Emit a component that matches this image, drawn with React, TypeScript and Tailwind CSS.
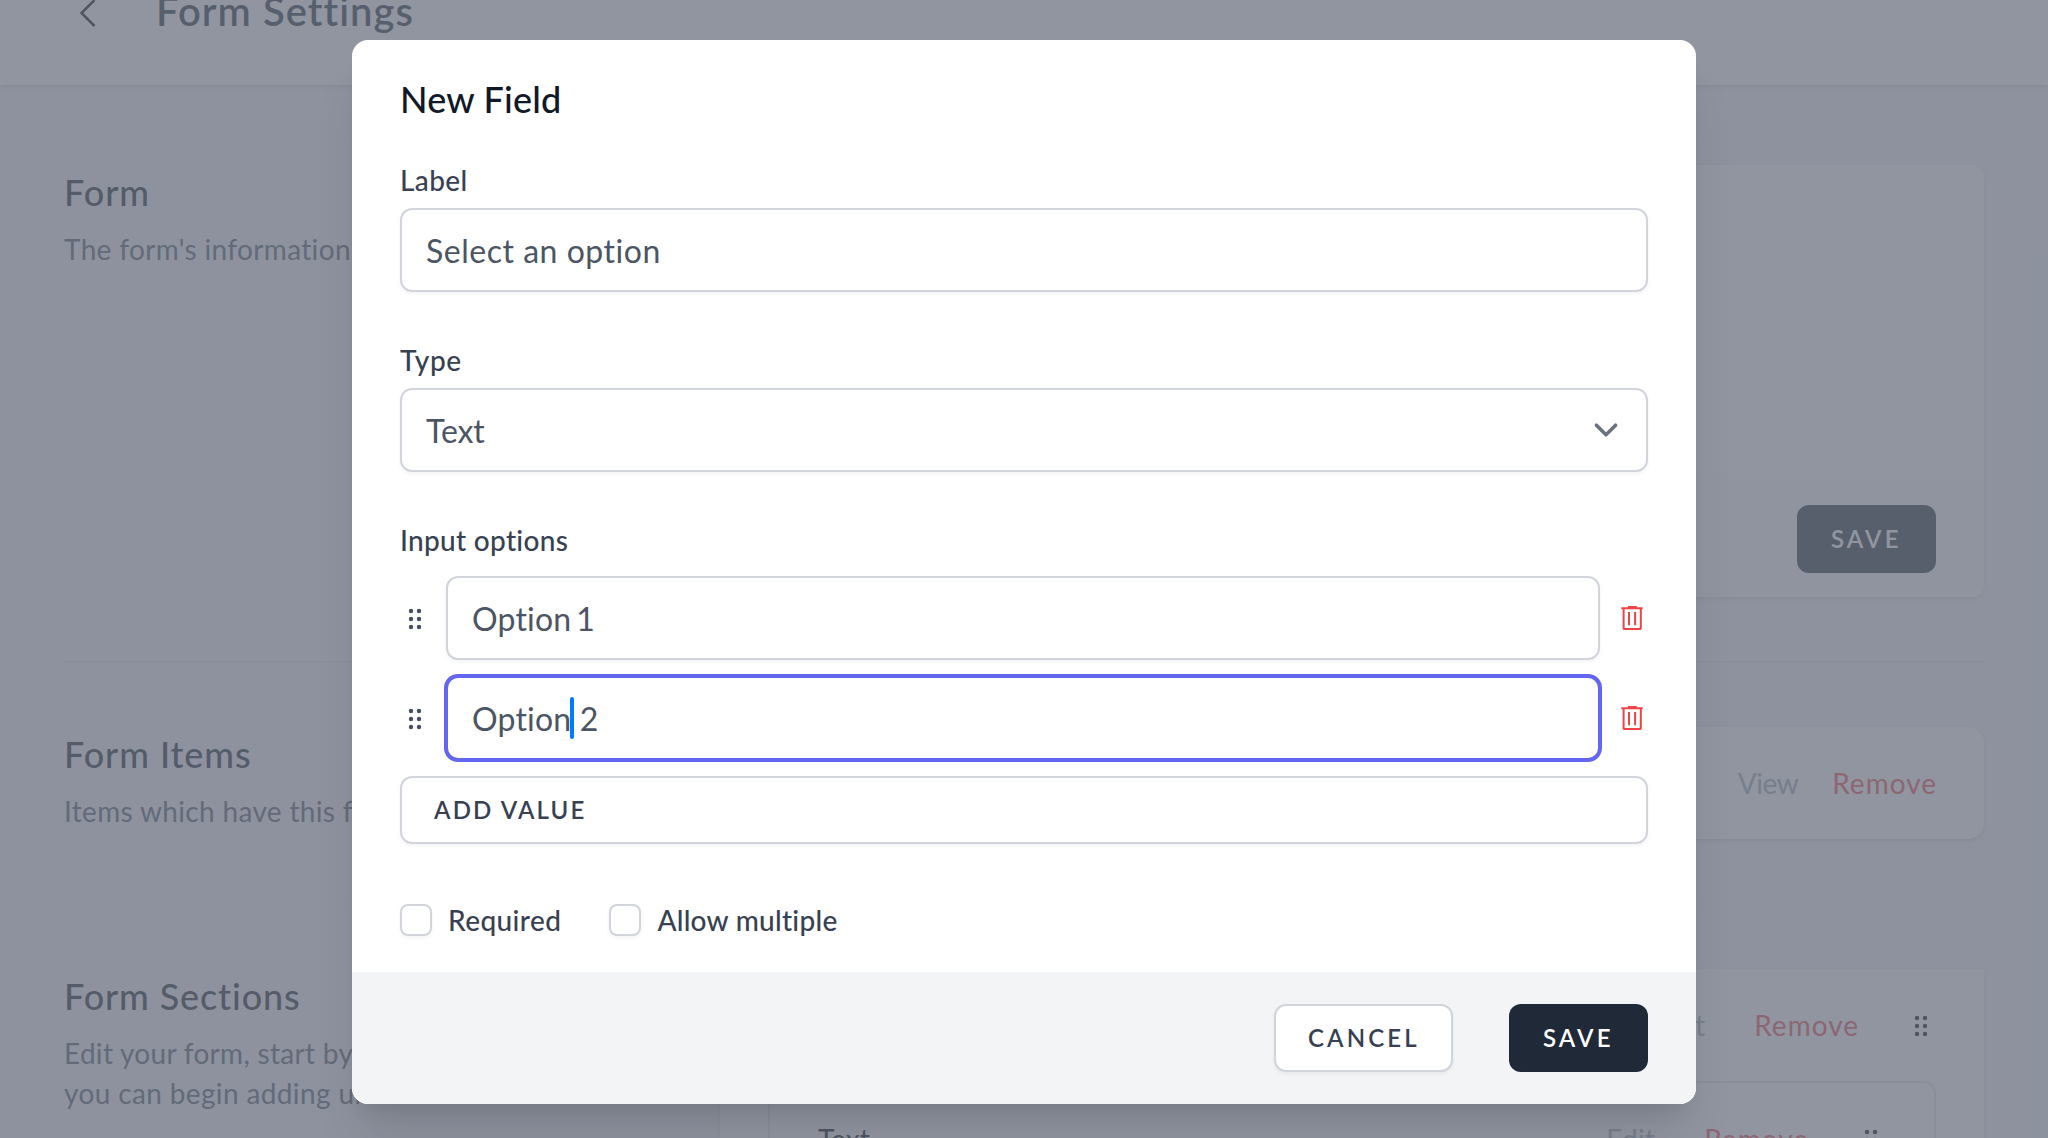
import type { ReactNode } from "react";

const field =
  "flex h-[84px] items-center rounded-xl border-2 border-[#d1d5db] bg-white px-6 pt-[2px] text-[32px] text-[#4b5563] shadow-[0_2px_4px_rgba(0,0,0,0.05)]";

function DragDots({ className }: { className: string }) {
  return (
    <svg viewBox="0 0 30 32" className={`h-8 w-[30px] shrink-0 ${className}`} fill="currentColor">
      {[9, 17, 25].map((y) => (
        <g key={y}>
          <circle cx="11" cy={y} r="2.2" />
          <circle cx="19" cy={y} r="2.2" />
        </g>
      ))}
    </svg>
  );
}

function TrashIcon() {
  return (
    <svg viewBox="0 0 32 32" className="h-8 w-8 shrink-0 text-[#ef4444]" fill="none" stroke="currentColor" strokeWidth="2">
      <path d="M5.3 6.3H26.7M12 5H20.8M13 10V23.3M19.1 10V23.3" />
      <path d="M7.6 6.3V26.2a.9.9 0 0 0 .9.9H23.9a.9.9 0 0 0 .9-.9V6.3" />
    </svg>
  );
}

function OptionRow({ focused, children }: { focused?: boolean; children: ReactNode }) {
  return (
    <div className="flex items-center gap-4">
      <DragDots className="text-[#434d5c]" />
      <div
        className={
          focused
            ? "flex h-[84px] flex-1 items-center rounded-xl border-2 border-[#6366f1] bg-white px-6 pt-[2px] text-[32px] text-[#4b5563] shadow-[0_0_0_2px_#6366f1]"
            : `${field} flex-1`
        }
      >
        {children}
      </div>
      <TrashIcon />
    </div>
  );
}

function Section({ title, titleClass, text, children }: { title: string; titleClass: string; text: ReactNode; children: ReactNode }) {
  return (
    <section className="mx-16 flex">
      <div className="w-[656px] shrink-0">
        <h2 className={`h-[52px] text-[36px] leading-[54px] font-medium text-[#111827] ${titleClass}`}>{title}</h2>
        <div className="mt-3 text-[28px] leading-10 whitespace-nowrap text-[#4b5563]">{text}</div>
      </div>
      <div className="flex-1">{children}</div>
    </section>
  );
}

function Divider() {
  return <div className="mx-16 my-16 h-0.5 shrink-0 bg-[#ebedf0]" />;
}

function Page() {
  return (
    <div className="flex h-full flex-col overflow-hidden bg-[#f3f4f6]">
      <header className="-mt-[61px] flex h-[146px] shrink-0 items-center bg-white pl-[79px] shadow-[0_2px_6px_rgba(0,0,0,0.1),0_2px_4px_-2px_rgba(0,0,0,0.1)]">
        <svg viewBox="0 0 18 30" className="mt-[2px] h-[30px] w-[18px]" fill="none" stroke="#000" strokeWidth="2.5">
          <path d="M15.5 2L2.5 15L15.5 28" />
        </svg>
        <h1 className="mb-[2px] ml-[59px] text-[40px] font-semibold tracking-[1.05px] text-[#1f2937]">Form Settings</h1>
      </header>
      <div className="h-20 shrink-0" />
      <Section title="Form" titleClass="tracking-[0.95px]" text={<p className="tracking-[0.34px]">The form's information.</p>}>
        <div className="overflow-hidden rounded-xl shadow-[0_2px_6px_rgba(0,0,0,0.1)]">
          <div className="h-[313px] bg-white" />
          <div className="flex h-[119px] items-center justify-end bg-[#f9fafb] px-12">
            <button className="mt-[3px] h-[68px] w-[139px] rounded-xl bg-[#1f2937] pb-px pl-[34px] text-left text-[24px] font-semibold tracking-[3.1px] text-white">
              SAVE
            </button>
          </div>
        </div>
      </Section>
      <Divider />
      <Section title="Form Items" titleClass="tracking-[0.92px]" text={<p className="tracking-[0.34px]">Items which have this form.</p>}>
        <div className="flex h-28 items-center justify-end gap-8 rounded-2xl bg-white px-12 text-[28px] shadow-[0_2px_6px_rgba(0,0,0,0.1),0_2px_4px_-2px_rgba(0,0,0,0.1)]">
          <span className="mr-[2px] tracking-[-0.44px] text-[#9ca3af]">View</span>
          <span className="-mr-px tracking-[1px] text-[#ef4444]">Remove</span>
        </div>
      </Section>
      <Divider />
      <Section
        title="Form Sections"
        titleClass="tracking-[0.88px]"
        text={
          <>
            <p className="tracking-[0.3px]">Edit your form, start by</p>
            <p className="tracking-[0.37px]">you can begin adding until</p>
          </>
        }
      >
        <div className="bg-white px-12 text-[28px] shadow-[0_2px_6px_rgba(0,0,0,0.1)]">
          <div className="flex h-28 items-center justify-end gap-12">
            <span className="mr-px tracking-[0.24px] text-[#9ca3af]">Edit</span>
            <span className="-mr-px tracking-[1px] text-[#ef4444]">Remove</span>
            <DragDots className="text-black" />
          </div>
          <div className="h-[300px] rounded-xl border-2 border-[#e5e7eb] px-12">
            <div className="flex h-28 items-center gap-12">
              <span className="flex-1 text-black">Text</span>
              <span className="mr-px tracking-[0.24px] text-[#9ca3af]">Edit</span>
              <span className="-mr-px tracking-[1px] text-[#ef4444]">Remove</span>
              <DragDots className="text-black" />
            </div>
          </div>
        </div>
      </Section>
    </div>
  );
}

function Checkbox({ label, className }: { label: string; className: string }) {
  return (
    <label className="flex items-center gap-4">
      <span className="h-8 w-8 rounded-lg border-2 border-[#d1d5db] bg-white shadow-[0_2px_4px_rgba(0,0,0,0.05)]" />
      <span className={`text-[28px] leading-8 font-medium text-[#374151] ${className}`}>{label}</span>
    </label>
  );
}

function NewFieldModal() {
  return (
    <div className="flex h-[1064px] w-[1344px] flex-col overflow-hidden rounded-2xl bg-white shadow-[0_40px_50px_-10px_rgba(0,0,0,0.1),0_16px_20px_-12px_rgba(0,0,0,0.1)]">
      <div className="flex-1 px-12 pt-[31px]">
        <h3 className="text-[36px] leading-[56px] font-medium tracking-[0.2px] text-[#111827]">New Field</h3>

        <div className="mt-[33px] text-[28px] leading-10 font-medium tracking-[0.4px] text-[#374151]">Label</div>
        <div className={`${field} mt-2`}>
          <span className="tracking-[0.52px]">Select an option</span>
        </div>

        <div className="mt-[48px] text-[28px] leading-10 font-medium tracking-[0.61px] text-[#374151]">Type</div>
        <div className={`${field} mt-2 justify-between pr-4`}>
          <span className="tracking-[-0.1px]">Text</span>
          <svg viewBox="0 0 20 20" className="-mt-[2px] h-12 w-12" fill="none" stroke="#6b7280" strokeWidth="1.5" strokeLinecap="round" strokeLinejoin="round">
            <path d="M6 8l4 4 4-4" />
          </svg>
        </div>

        <div className="mt-[48px] text-[28px] leading-10 font-medium tracking-[0.3px] text-[#374151]">Input options</div>
        <div className="mt-4 flex flex-col gap-4">
          <OptionRow>
            <span className="tracking-[0.2px] [word-spacing:-3.5px]">Option 1</span>
          </OptionRow>
          <OptionRow focused>
            <span className="relative tracking-[0.2px]">
              Option 2
              <span className="absolute top-1/2 left-[98px] -mt-px h-[42px] w-1 -translate-y-1/2 rounded-full bg-[#007aff]" />
            </span>
          </OptionRow>
          <button className="h-[68px] rounded-xl border-2 border-[#d1d5db] bg-white pb-px pl-8 text-left text-[24px] font-semibold tracking-[2.15px] text-[#374151] shadow-[0_2px_4px_rgba(0,0,0,0.05)]">
            ADD VALUE
          </button>
        </div>

        <div className="mt-[60px] flex gap-12">
          <Checkbox label="Required" className="tracking-[0.42px]" />
          <Checkbox label="Allow multiple" className="tracking-[0.26px]" />
        </div>
      </div>
      <div className="flex h-[132px] shrink-0 items-center justify-end gap-14 bg-[#f3f4f6] px-12">
        <button className="h-[68px] w-[179px] rounded-xl border-2 border-[#d1d5db] bg-white pb-px pl-8 text-left text-[24px] font-semibold tracking-[3.14px] text-[#374151] shadow-[0_2px_4px_rgba(0,0,0,0.05)]">
          CANCEL
        </button>
        <button className="h-[68px] w-[139px] rounded-xl bg-[#1f2937] pb-px pl-[34px] text-left text-[24px] font-semibold tracking-[3.1px] text-white">
          SAVE
        </button>
      </div>
    </div>
  );
}

export default function App() {
  return (
    <div className="relative h-[1138px] overflow-hidden font-['Lato',sans-serif]">
      <Page />
      <div className="absolute inset-0 flex items-start justify-center bg-[rgba(107,114,128,0.75)] pt-10">
        <NewFieldModal />
      </div>
    </div>
  );
}
